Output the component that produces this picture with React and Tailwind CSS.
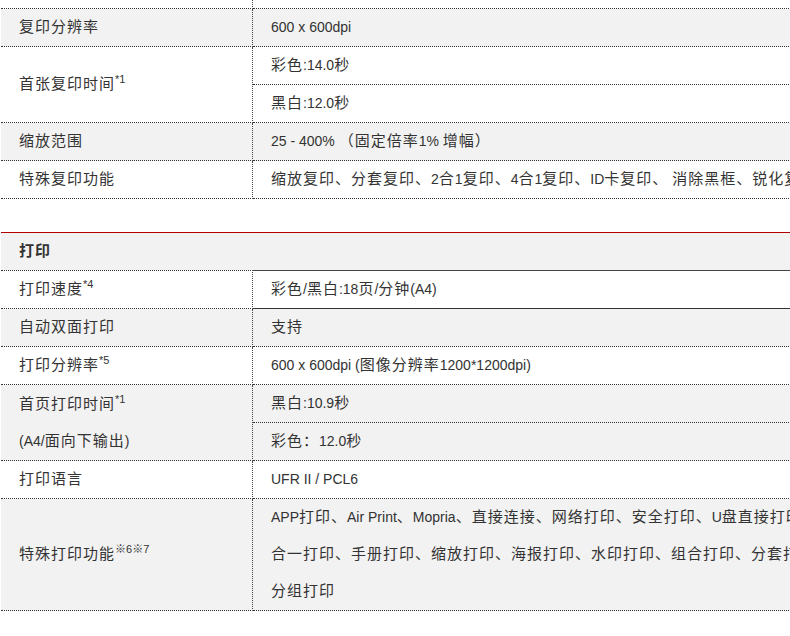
import React from 'react';

// CJK runs are set a little larger and looser than the Latin text, as in the source page
const CJK = /([\u2e80-\u9fff\u3000-\u303f\uff00-\uffef]+)/;

const Txt = ({ s }) =>
    s.split(CJK).map((part, i) =>
        i % 2 ? (
            <span key={i} className="text-[15px] tracking-[1px]">
                {part}
            </span>
        ) : (
            part
        )
    );

const copyRows = [
    { label: ['复印分辨率'], values: ['600 x 600dpi'], gray: true },
    { label: ['首张复印时间'], note: '*1', values: ['彩色:14.0秒', '黑白:12.0秒'], split: true },
    { label: ['缩放范围'], values: ['25 - 400% （固定倍率1% 增幅）'], gray: true },
    {
        label: ['特殊复印功能'],
        values: ['缩放复印、分套复印、2合1复印、4合1复印、ID卡复印、 消除黑框、锐化复印、'],
    },
];

const printRows = [
    { label: ['打印速度'], note: '*4', values: ['彩色/黑白:18页/分钟(A4)'], first: true },
    { label: ['自动双面打印'], values: ['支持'], gray: true },
    { label: ['打印分辨率'], note: '*5', values: ['600 x 600dpi (图像分辨率1200*1200dpi)'] },
    {
        label: ['首页打印时间', '(A4/面向下输出)'],
        note: '*1',
        values: ['黑白:10.9秒', '彩色：12.0秒'],
        split: true,
        gray: true,
    },
    { label: ['打印语言'], values: ['UFR II / PCL6'] },
    {
        label: ['特殊打印功能'],
        note: '※6※7',
        values: [
            'APP打印、Air Print、Mopria、直接连接、网络打印、安全打印、U盘直接打印、N',
            '合一打印、手册打印、缩放打印、海报打印、水印打印、组合打印、分套打印、',
            '分组打印',
        ],
        gray: true,
    },
];

const SpecRow = ({ row }) => (
    <div className={`flex ${row.gray ? 'bg-[#f2f2f2]' : 'bg-white'}`}>
        <div
            className={`w-[252px] shrink-0 flex flex-col border-r border-r-[#444] border-b border-dotted border-b-[#333] pl-[18px] ${
                row.first ? 'border-t border-t-[#333]' : ''
            }`}
        >
            {row.label.map((line, i) => (
                <div key={i} className="flex-1 flex items-center whitespace-nowrap">
                    <span>
                        <Txt s={line} />
                        {i === 0 && row.note && <sup className="text-[11px] -top-1.5">{row.note}</sup>}
                    </span>
                </div>
            ))}
        </div>
        <div
            className={`flex-1 flex flex-col ${row.split ? '' : 'border-b border-dotted border-[#333]'} ${
                row.first ? 'border-t border-solid border-t-[#444]' : ''
            }`}
        >
            {row.values.map((v, i) => (
                <div
                    key={i}
                    className={`flex items-center pl-[18px] whitespace-nowrap ${
                        row.split ? 'h-[38px] border-b border-dotted border-[#333]' : 'h-[37px]'
                    }`}
                >
                    <span>
                        <Txt s={v} />
                    </span>
                </div>
            ))}
        </div>
    </div>
);

export default function App() {
    return (
        <div className="w-full h-[636px] overflow-hidden bg-white text-[14px] text-[#333] font-['Liberation_Sans','Noto_Sans_CJK_SC',sans-serif]">
            <div className="ml-px w-[1100px]">
                {/* copy section, scrolled so only the bottom of the first row shows */}
                <div className="flex">
                    <div className="w-[252px] h-[9px] shrink-0 border-r border-r-[#444] border-b border-dotted border-b-[#333]" />
                    <div className="flex-1 h-[9px] border-b border-dotted border-[#333]" />
                </div>
                {copyRows.map((row, i) => (
                    <SpecRow key={i} row={row} />
                ))}

                <div className="mt-[33px] border-t border-[#b20000]">
                    <div className="h-[37px] flex items-center pl-[18px] bg-[#f2f2f2] font-bold">
                        <Txt s="打印" />
                    </div>
                    {printRows.map((row, i) => (
                        <SpecRow key={i} row={row} />
                    ))}
                </div>
            </div>
        </div>
    );
}
